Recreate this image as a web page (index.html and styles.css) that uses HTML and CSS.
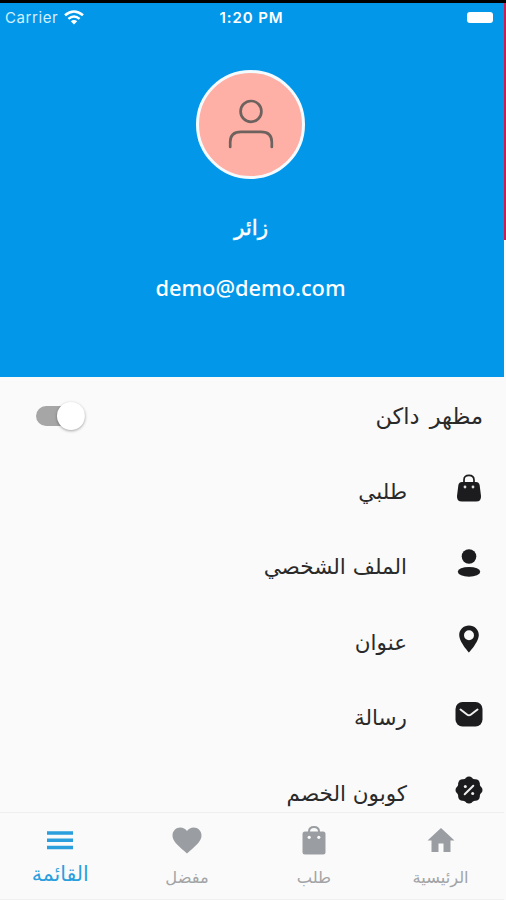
FILE: index.html
```html
<!DOCTYPE html>
<html lang="ar" dir="rtl">
    <head>
        <title>القائمة</title>
        <meta charset="UTF-8"/>
        <meta name="viewport" content="width=device-width, initial-scale=1.0"/>
        <link rel="stylesheet" href="styles.css">
    </head>
    <body>
        <div class="app">
            <header class="profile">
                <div class="status" dir="ltr">
                    <div class="carrier">
                        <span>Carrier</span>
                        <svg width="20" height="15" viewBox="0 0 20 15" fill="none" stroke="#fff" stroke-width="2.5">
                            <path d="M1 5.3Q10-2.4 19 5.3"/>
                            <path d="M4.4 8.9Q10 4 15.6 8.9"/>
                            <path d="M10 14.5L6.8 11.3Q10 8.7 13.2 11.3Z" fill="#fff" stroke="none"/>
                        </svg>
                    </div>
                    <span class="time">1:20 PM</span>
                    <div class="battery"></div>
                </div>
                <div class="avatar">
                    <svg width="46" height="50" viewBox="0 0 46 50" fill="none" stroke="#6d625e" stroke-width="2.7">
                        <circle cx="23" cy="12.4" r="10.4"/>
                        <path d="M2.2 48V43Q2.2 32.8 13 32.8H33Q43.8 32.8 43.8 43V48" stroke-linecap="round"/>
                    </svg>
                </div>
                <div class="name">زائر</div>
                <div class="email" dir="ltr">demo@demo.com</div>
            </header>

            <main class="list">
                <div class="row">
                    <span class="label title">مظهر داكن</span>
                    <span class="switch"></span>
                </div>
                <div class="row">
                    <svg class="icon" width="28" height="28" viewBox="0 0 28 28">
                        <path d="M9 10V6Q9 1.3 14 1.3T19 6V10" fill="none" stroke="#1c1c1e" stroke-width="1.7"/>
                        <path d="M7 8H21Q24 8 24.6 11L26 22Q26.5 27.5 21 27.5H7Q1.5 27.5 2 22L3.4 11Q4 8 7 8Z" fill="#1c1c1e"/>
                        <circle cx="10" cy="13" r="1.4" fill="#ddd"/>
                        <circle cx="18" cy="13" r="1.4" fill="#ddd"/>
                    </svg>
                    <span class="label">طلبي</span>
                </div>
                <div class="row">
                    <svg class="icon" width="28" height="28" viewBox="0 0 28 28" fill="#1c1c1e">
                        <circle cx="14" cy="7.5" r="7.3"/>
                        <ellipse cx="14" cy="22.8" rx="11.2" ry="4.9"/>
                    </svg>
                    <span class="label">الملف الشخصي</span>
                </div>
                <div class="row">
                    <svg class="icon" width="28" height="28" viewBox="0 0 28 28" fill="#1c1c1e">
                        <path fill-rule="evenodd" d="M14 .5C8.5 .5 4.2 4.7 4.2 10C4.2 17 14 27.5 14 27.5S23.8 17 23.8 10C23.8 4.7 19.5 .5 14 .5ZM14 5.2A5 5 0 1 1 14 15.2A5 5 0 1 1 14 5.2Z"/>
                    </svg>
                    <span class="label">عنوان</span>
                </div>
                <div class="row">
                    <svg class="icon" width="28" height="28" viewBox="0 0 28 28">
                        <rect x=".5" y="2" width="27" height="24.5" rx="7" fill="#1c1c1e"/>
                        <path d="M5.5 9.5L12 14.5Q14 16 16 14.5L22.5 9.5" fill="none" stroke="#eee" stroke-width="2" stroke-linecap="round"/>
                    </svg>
                    <span class="label">رسالة</span>
                </div>
                <div class="row">
                    <svg class="icon" width="28" height="28" viewBox="0 0 28 28">
                        <g fill="#1c1c1e">
                            <circle cx="14" cy="14" r="12"/>
                            <circle cx="14" cy="4.8" r="4.3"/>
                            <circle cx="20.5" cy="7.5" r="4.3"/>
                            <circle cx="23.2" cy="14" r="4.3"/>
                            <circle cx="20.5" cy="20.5" r="4.3"/>
                            <circle cx="14" cy="23.2" r="4.3"/>
                            <circle cx="7.5" cy="20.5" r="4.3"/>
                            <circle cx="4.8" cy="14" r="4.3"/>
                            <circle cx="7.5" cy="7.5" r="4.3"/>
                        </g>
                        <path d="M9.7 18.3L18.3 9.7" stroke="#eee" stroke-width="2" stroke-linecap="round"/>
                        <circle cx="10.3" cy="10.6" r="1.5" fill="#eee"/>
                        <circle cx="17.7" cy="17.4" r="1.5" fill="#eee"/>
                    </svg>
                    <span class="label">كوبون الخصم</span>
                </div>
            </main>

            <nav class="tabs">
                <a class="tab">
                    <svg width="32" height="32" viewBox="0 0 32 32" fill="#9a9da1">
                        <path d="M16 4L29.5 16.5H25.5V28H18.5V19.5H13.5V28H6.5V16.5H2.5Z"/>
                    </svg>
                    <span>الرئيسية</span>
                </a>
                <a class="tab">
                    <svg width="32" height="32" viewBox="0 0 32 32">
                        <path d="M11 10V7.5Q11 3 16 3T21 7.5V10" fill="none" stroke="#9a9da1" stroke-width="2"/>
                        <rect x="4.5" y="7.5" width="23" height="23" rx="2.5" fill="#9a9da1"/>
                        <circle cx="11.2" cy="13.3" r="1.6" fill="#fafafa"/>
                        <circle cx="20.8" cy="13.3" r="1.6" fill="#fafafa"/>
                    </svg>
                    <span>طلب</span>
                </a>
                <a class="tab">
                    <svg width="32" height="32" viewBox="0 0 32 32" fill="#9a9da1">
                        <path d="M16 29.5L13.5 27.3C6 20.5 1.5 17 1.5 11.5C1.5 7 5 3.6 9.3 3.6C12 3.6 14.5 5 16 7C17.5 5 20 3.6 22.7 3.6C27 3.6 30.5 7 30.5 11.5C30.5 17 26 20.5 18.5 27.3Z"/>
                    </svg>
                    <span>مفضل</span>
                </a>
                <a class="tab active">
                    <svg width="32" height="32" viewBox="0 0 32 32" fill="none" stroke="#2b9fdd" stroke-width="3.5">
                        <path d="M3 9H29M3 16.2H29M3 23.4H29"/>
                    </svg>
                    <span>القائمة</span>
                </a>
            </nav>
        </div>
        <div class="edge"></div>
    </body>
</html>
```

FILE: styles.css
```css
* {
    box-sizing: border-box;
}
body {
    margin: 0;
    height: 900px;
    display: flex;
    direction: ltr;
    overflow: hidden;
    background-color: #fafafa;
    border-top: 3px solid #000;
    font-family: "DejaVu Sans", sans-serif;
}
.app {
    width: 504px;
    direction: rtl;
    display: flex;
    flex-direction: column;
}
.edge {
    width: 2px;
    height: 237px;
    background-color: #c8204f;
}

/* header */
.profile {
    height: 374px;
    flex: none;
    display: flex;
    flex-direction: column;
    align-items: center;
    background-color: #0297e9;
    color: #fff;
}
.status {
    width: 100%;
    height: 28px;
    padding: 0 11px 0 5px;
    display: grid;
    grid-template-columns: 1fr auto 1fr;
    align-items: center;
    font-family: Inter, sans-serif;
    font-size: 15px;
}
.carrier {
    display: flex;
    align-items: center;
    gap: 6px;
    color: #d3f0ff;
    letter-spacing: 0.6px;
}
.time {
    font-weight: 600;
    letter-spacing: 0.9px;
    margin-left: 5px;
}
.battery {
    justify-self: end;
    width: 26px;
    height: 11px;
    border-radius: 3px;
    background-color: #fff;
}
.avatar {
    width: 109px;
    height: 109px;
    margin-top: 39px;
    margin-right: 3px;
    border: 3px solid #f4fbff;
    border-radius: 50%;
    background-color: #ffb0a6;
    display: flex;
    align-items: center;
    justify-content: center;
}
.avatar svg {
    margin-bottom: 2px;
}
.name {
    height: 40px;
    margin-top: 29px;
    margin-right: 2px;
    line-height: 40px;
    font-size: 21.5px;
    -webkit-text-stroke: 0.4px #fff;
}
.email {
    height: 40px;
    margin-top: 20px;
    margin-right: 3px;
    line-height: 40px;
    font-family: "Noto Sans", sans-serif;
    font-weight: 500;
    font-size: 21.8px;
}

/* menu rows */
.list {
    flex: 1;
    min-height: 0;
    overflow: hidden;
    padding: 1px 21px 0 36px;
}
.row {
    height: 75.4px;
    display: flex;
    align-items: center;
}
.label {
    font-size: 21.5px;
    line-height: 40px;
    padding-top: 2px;
    color: #2a2a2a;
    white-space: nowrap;
}
.title {
    font-size: 22.5px;
    padding-top: 0;
    word-spacing: 3px;
}
.icon {
    flex: none;
    margin: 0 0 6px 48px;
}
.switch {
    width: 49px;
    height: 20px;
    margin-right: auto;
    border-radius: 10px;
    background-color: #a6a6a6;
    display: flex;
    align-items: center;
    direction: ltr;
    justify-content: flex-end;
}
.switch::after {
    content: "";
    width: 28px;
    height: 28px;
    flex: none;
    border-radius: 50%;
    background-color: #fff;
    box-shadow: 0 1px 3px rgba(0, 0, 0, 0.35);
}

/* bottom bar */
.tabs {
    height: 88px;
    flex: none;
    padding-top: 11px;
    border-top: 1px solid #eeeeee;
    border-bottom: 1px solid #f0f0f0;
    background-color: #fafafa;
    display: flex;
}
.tab {
    width: 126.8px;
    flex: none;
    display: flex;
    flex-direction: column;
    align-items: center;
    color: #a2a4a6;
    font-size: 16.3px;
    line-height: 43px;
}
.tab svg {
    flex: none;
}
.active {
    color: #2b9fdd;
    font-size: 20.5px;
    line-height: 37px;
}
```
